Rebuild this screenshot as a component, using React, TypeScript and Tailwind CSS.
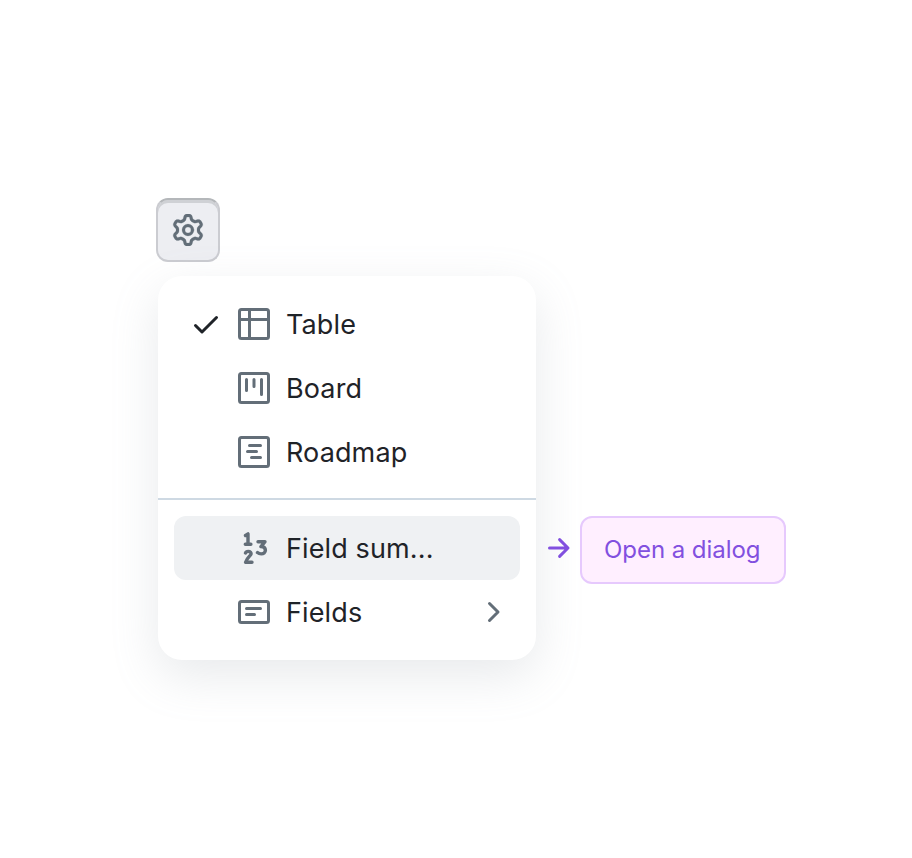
import type { ReactNode } from "react";

type IconProps = { children: ReactNode; className?: string };

function Icon({ children, className = "" }: IconProps) {
  return (
    <svg
      viewBox="0 0 16 16"
      className={`size-8 shrink-0 ${className}`}
      fill="none"
      stroke="currentColor"
      strokeWidth="1.5"
      strokeLinecap="round"
      strokeLinejoin="round"
      aria-hidden="true"
    >
      {children}
    </svg>
  );
}

const GearIcon = () => (
  <Icon className="text-[#636e78]">
    <path
      fill="currentColor"
      strokeWidth="0.1"
      d="M8 0a8.2 8.2 0 0 1 .701.031C9.444.095 9.99.645 10.16 1.29l.288 1.107c.018.066.079.158.212.224.231.114.454.243.668.386.123.082.233.09.299.071l1.103-.303c.644-.176 1.392.021 1.82.63.27.385.506.792.704 1.218.315.675.111 1.422-.364 1.891l-.814.806c-.049.048-.098.147-.088.294.016.257.016.515 0 .772-.01.147.038.246.088.294l.814.806c.475.469.679 1.216.364 1.891a7.977 7.977 0 0 1-.704 1.217c-.428.61-1.176.807-1.82.63l-1.102-.302c-.067-.019-.177-.011-.3.071a5.909 5.909 0 0 1-.668.386c-.133.066-.194.158-.211.224l-.29 1.106c-.168.646-.715 1.196-1.458 1.26a8.006 8.006 0 0 1-1.402 0c-.743-.064-1.289-.614-1.458-1.26l-.289-1.106c-.018-.066-.079-.158-.212-.224a5.738 5.738 0 0 1-.668-.386c-.123-.082-.233-.09-.299-.071l-1.103.303c-.644.176-1.392-.021-1.82-.63a8.12 8.12 0 0 1-.704-1.218c-.315-.675-.111-1.422.363-1.891l.815-.806c.05-.048.098-.147.088-.294a6.214 6.214 0 0 1 0-.772c.01-.147-.038-.246-.088-.294l-.815-.806C.635 6.045.431 5.298.746 4.623a7.92 7.92 0 0 1 .704-1.217c.428-.61 1.176-.807 1.82-.63l1.102.302c.067.019.177.011.3-.071.214-.143.437-.272.668-.386.133-.066.194-.158.211-.224l.29-1.106C6.009.645 6.556.095 7.299.03 7.53.01 7.764 0 8 0Zm-.571 1.525c-.036.003-.108.036-.137.146l-.289 1.105c-.147.561-.549.967-.998 1.189-.173.086-.34.183-.5.29-.417.278-.97.423-1.529.27l-1.103-.303c-.109-.03-.175.016-.195.045-.22.312-.412.644-.573.99-.014.031-.021.11.059.19l.815.806c.411.406.562.957.53 1.456a4.709 4.709 0 0 0 0 .582c.032.499-.119 1.05-.53 1.456l-.815.806c-.081.08-.073.159-.059.19.162.346.353.677.573.989.02.03.085.076.195.046l1.102-.303c.56-.153 1.113-.008 1.53.27.161.107.328.204.501.29.447.222.85.629.997 1.189l.289 1.105c.029.109.101.143.137.146a6.6 6.6 0 0 0 1.142 0c.036-.003.108-.036.137-.146l.289-1.105c.147-.561.549-.967.998-1.189.173-.086.34-.183.5-.29.417-.278.97-.423 1.529-.27l1.103.303c.109.029.175-.016.195-.045.22-.313.411-.644.573-.99.014-.031.021-.11-.059-.19l-.815-.806c-.411-.406-.562-.957-.53-1.456a4.709 4.709 0 0 0 0-.582c-.032-.499.119-1.05.53-1.456l.815-.806c.081-.08.073-.159.059-.19a6.464 6.464 0 0 0-.573-.989c-.02-.03-.085-.076-.195-.046l-1.102.303c-.56.153-1.113.008-1.53-.27a4.44 4.44 0 0 0-.501-.29c-.447-.222-.85-.629-.997-1.189l-.289-1.105c-.029-.11-.101-.143-.137-.146a6.6 6.6 0 0 0-1.142 0ZM11 8a3 3 0 1 1-6 0 3 3 0 0 1 6 0ZM9.5 8a1.5 1.5 0 1 0-3.001.001A1.5 1.5 0 0 0 9.5 8Z"
    />
  </Icon>
);

const CheckIcon = () => (
  <Icon className="text-[#1f2328]">
    <path d="M2.75 8.75 6 12l7.25-7.25" />
  </Icon>
);

const TableIcon = () => (
  <Icon>
    <rect x="0.75" y="0.75" width="14.5" height="14.5" rx="1" />
    <path d="M5.75 .75v14.5M.75 5.75h14.5" />
  </Icon>
);

const BoardIcon = () => (
  <Icon>
    <rect x="0.75" y="0.75" width="14.5" height="14.5" rx="1" />
    <path d="M4.25 3.75v5.5M8 3.75v3.5M11.75 3.75v7.5" />
  </Icon>
);

const RoadmapIcon = () => (
  <Icon>
    <rect x="0.75" y="0.75" width="14.5" height="14.5" rx="1" />
    <path d="M5.75 4.75h5.5M4.75 7.75h4.5M6.75 10.75h4.5" />
  </Icon>
);

const NumberIcon = () => (
  <Icon>
    <path
      strokeWidth="1.7"
      d="M3.75 1.75 5 .95V6.1M3.65 6.15h2.8M3.75 10.5c.2-.55.75-.8 1.35-.8 1 0 1.55.6 1.4 1.35-.2.9-1.75 1.45-2.7 4.1h3.2M10 4.85h3.5l-2 2.45c1.35 0 2.2.75 2.2 1.85s-.9 1.8-2.05 1.8c-.75 0-1.4-.2-1.9-.65"
    />
  </Icon>
);

const FieldsIcon = () => (
  <Icon>
    <rect x="0.75" y="2.75" width="14.5" height="10.5" rx="1" />
    <path d="M4.25 6.25h7M4.25 9.25h4" />
  </Icon>
);

function MenuItem({ icon, label, checked, active, submenu }: {
  icon: ReactNode;
  label: string;
  checked?: boolean;
  active?: boolean;
  submenu?: boolean;
}) {
  return (
    <div
      role="menuitem"
      className={`flex h-16 items-center rounded-xl pr-3 pl-4 text-[#636e78] ${active ? "bg-[#eff1f3]" : ""}`}
    >
      <div className="mr-4 flex size-8 shrink-0">{checked && <CheckIcon />}</div>
      {icon}
      <span className="ml-4 grow pt-0.5 text-[27px] leading-10 tracking-[0.12px] whitespace-nowrap text-[#1f2328]">{label}</span>
      {submenu && (
        <Icon>
          <path d="m6.75 3.75 4.25 4.25-4.25 4.25" />
        </Icon>
      )}
    </div>
  );
}

export default function App() {
  return (
    <main className="h-[858px] w-[912px] bg-white pt-[198px] pl-[156px] font-['Inter','Liberation_Sans',sans-serif]">
      <button
        aria-label="View settings"
        className="flex size-16 items-center justify-center rounded-xl border-2 border-[#cbccd1] border-t-[#b4b7ba] bg-[#edeef2] shadow-[inset_0_3px_0_#cfd1d5]"
      >
        <GearIcon />
      </button>
      <div className="mt-3.5 ml-0.5 flex">
        <div role="menu" className="h-[384px] w-[378px] shrink-0 rounded-3xl bg-white shadow-[0_16px_48px_rgba(140,149,159,0.2)]">
          <div className="px-4 pt-4 pb-[14px]">
            <MenuItem icon={<TableIcon />} label="Table" checked />
            <MenuItem icon={<BoardIcon />} label="Board" />
            <MenuItem icon={<RoadmapIcon />} label="Roadmap" />
          </div>
          <div className="h-0.5 bg-[#ced9e3]" />
          <div className="p-4">
            <MenuItem icon={<NumberIcon />} label="Field sum..." active />
            <MenuItem icon={<FieldsIcon />} label="Fields" submenu />
          </div>
        </div>
        <div className="mt-60 ml-2 flex h-[68px] items-center">
          <Icon className="-mt-[5px] text-[#8250df]">
            <path d="M2.75 8h9.2M7.8 3.8 12 8l-4.2 4.2" />
          </Icon>
          <div className="ml-1 flex h-[68px] w-[206px] items-center rounded-xl border-2 border-[#e6c9fd] bg-[#ffefff] pl-[22px] text-2xl tracking-[-0.05px] whitespace-nowrap text-[#8250df]">
            Open a dialog
          </div>
        </div>
      </div>
    </main>
  );
}
